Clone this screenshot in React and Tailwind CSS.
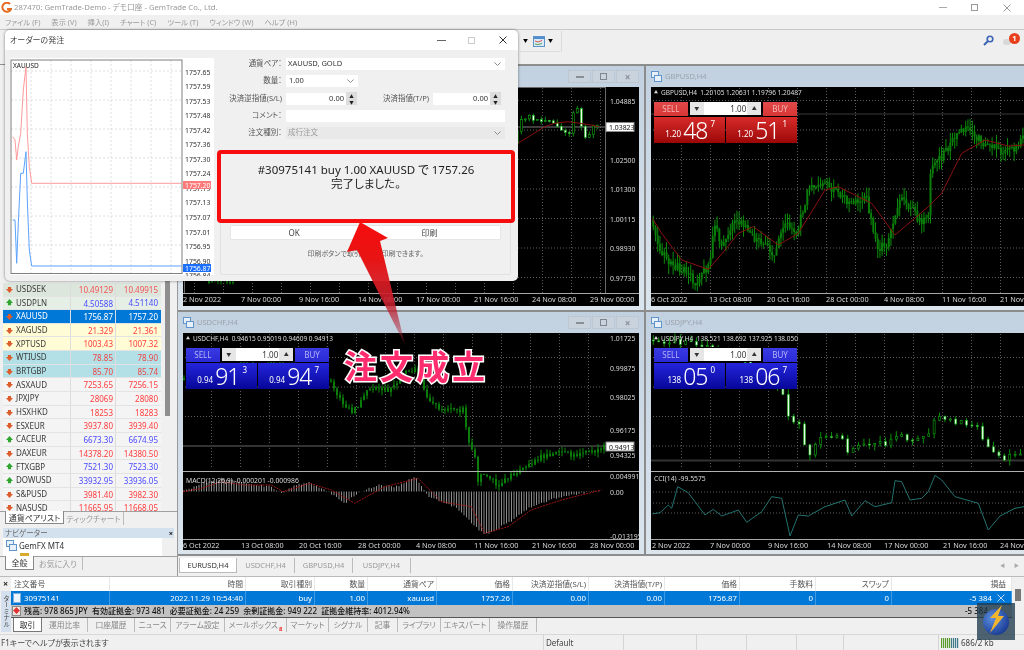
import React from 'react';

const FONT = "font-['Noto_Sans','Noto_Sans_CJK_JP',sans-serif] [font-feature-settings:'palt']";

// small repeatable noise so the candles stay the same on every run
const rnd = (seed) => {
  let s = seed;
  return () => {
    s = (s * 16807) % 2147483647;
    return (s % 1000) / 1000;
  };
};

const toPath = (pts) => pts.map(([x, y], i) => `${i ? 'L' : 'M'}${x.toFixed(1)} ${y.toFixed(1)}`).join(' ');

const lerp = (pts, x) => {
  for (let i = 1; i < pts.length; i++) {
    if (x <= pts[i][0]) {
      const [x0, y0] = pts[i - 1];
      const [x1, y1] = pts[i];
      return y0 + ((y1 - y0) * (x - x0)) / (x1 - x0 || 1);
    }
  }
  return pts[pts.length - 1][1];
};

const Candles = ({ pts, step = 3, seed = 7, noise = 4, wide = false, from, to }) => {
  const r = rnd(seed);
  const start = from ?? pts[0][0];
  const end = to ?? pts[pts.length - 1][0];
  const out = [];
  let prev = lerp(pts, start);
  for (let x = start; x < end; x += step) {
    const close = lerp(pts, x + step) + (r() - 0.5) * noise;
    const top = Math.min(prev, close);
    const bot = Math.max(prev, close);
    const bear = close > prev;
    const wickT = top - r() * noise;
    const wickB = bot + r() * noise;
    out.push(
      <g key={x}>
        <line x1={x + 1} x2={x + 1} y1={wickT} y2={wickB} stroke="#0b8f0b" strokeWidth="1" />
        {wide ? (
          <rect x={x} y={top} width="2" height={Math.max(bot - top, 1)} fill={bear ? '#e8ffe8' : '#000'} stroke="#0fa80f" strokeWidth="0.6" />
        ) : (
          <rect x={x} y={top} width="2" height={Math.max(bot - top, 1)} fill="#0a7d0a" />
        )}
      </g>
    );
    prev = close;
  }
  return <g>{out}</g>;
};

const Grid = ({ x0, y0, w, h, dx = 29, dy = 29.5 }) => {
  const v = [];
  const hz = [];
  for (let x = x0; x < w; x += dx) v.push(x);
  for (let y = y0; y < h; y += dy) hz.push(y);
  return (
    <g stroke="#5c5c5c" strokeDasharray="1 2" strokeWidth="1">
      {v.map((x) => <line key={x} x1={x + 0.5} x2={x + 0.5} y1="1" y2={h} />)}
      {hz.map((y) => <line key={y} x1="2" x2={w} y1={y + 0.5} y2={y + 0.5} />)}
    </g>
  );
};

const WinButtons = () => (
  <div className="flex gap-px">
    {['min', 'max', 'close'].map((b) => (
      <div key={b} className="w-[23px] h-[13px] bg-[#c9d3de] border border-[#bcc7d2] flex items-center justify-center">
        {b === 'min' && <div className="w-[8px] h-[2px] bg-[#8a8f96]" />}
        {b === 'max' && <div className="w-[7px] h-[7px] border border-[#7f858c]" />}
        {b === 'close' && <span className="text-[10px] leading-none font-bold text-[#8a8f96]">×</span>}
      </div>
    ))}
  </div>
);

const Price = ({ p, low }) => (
  <div className={`w-[71px] h-[26px] ${low} text-white flex items-center justify-end pr-[10px]`}>
    <span className="text-[8px] mt-[7px] mr-[2px]">{p[0]}</span>
    <span className="text-[23px] leading-none font-light tracking-[-1px]">{p[1]}</span>
    <span className="text-[8px] ml-[3px] mb-[12px]">{p[2]}</span>
  </div>
);

const TradePanel = ({ color, sell, buy }) => {
  const red = color === 'red';
  const top = red ? 'bg-gradient-to-b from-[#e04a4a] to-[#d83434]' : 'bg-gradient-to-b from-[#3a3ae2] to-[#2a2ad6]';
  const low = red ? 'bg-gradient-to-b from-[#d82a2a] to-[#9c0606]' : 'bg-gradient-to-b from-[#2424dc] to-[#06069a]';
  const label = red ? 'text-[#f4b4b4]' : 'text-[#b4b4f4]';
  return (
    <div className="absolute left-[3px] top-[15px] w-[143px] flex flex-col gap-px">
      <div className="flex h-[14px]">
        <div className={`w-[34px] ${top} ${label} text-[8px] flex items-center justify-center`}>SELL</div>
        <div className="w-[74px] mx-px -mt-px h-[15px] bg-white border border-black flex items-center text-[8px] text-[#333]">
          <span className="w-[14px] h-full bg-[#e6e6e6] flex items-center justify-center text-[5px]">▼</span>
          <span className="flex-1 text-right pr-[1px]">1.00</span>
          <span className="w-[14px] h-full bg-[#e6e6e6] flex items-center justify-center text-[5px]">▲</span>
        </div>
        <div className={`w-[34px] ${top} ${label} text-[8px] flex items-center justify-center`}>BUY</div>
      </div>
      <div className="flex gap-px">
        <Price p={sell} low={low} />
        <Price p={buy} low={low} />
      </div>
    </div>
  );
};

const ChartWindow = ({ title, info, panel, buttons, className, children }) => (
  <div className={`flex flex-col bg-gradient-to-b from-[#c2d1e0] to-[#dbe5ee] pl-[5px] pb-[4px] min-h-0 min-w-0 ${className}`}>
    <div className="h-[21px] shrink-0 flex items-center gap-[3px] text-[7.5px] text-[#9aa3ad]">
      <svg width="11" height="11" viewBox="0 0 11 11">
        <rect x="0.5" y="0.5" width="7" height="6" fill="#e8f1fa" stroke="#5f95cc" />
        <rect x="3.5" y="4.5" width="7" height="6" fill="#e8f1fa" stroke="#5f95cc" />
      </svg>
      <span className="flex-1">{title}</span>
      {buttons && <WinButtons />}
    </div>
    <div className="relative flex-1 bg-black overflow-hidden text-[8px]">
      {children}
      <div className="absolute left-[3px] top-[1px] text-[#ddd] flex items-center gap-[3px] text-[6.5px] whitespace-pre">
        <span className="text-[4px]">▲</span>
        {info}
      </div>
      {panel}
    </div>
  </div>
);

const DateAxis = ({ items, lineY, y }) => (
  <g>
    <line x1="0" x2="1000" y1={lineY + 0.5} y2={lineY + 0.5} stroke="#a8a8a8" />
    {items.map(([x, t]) => (
      <text key={t} x={x} y={y} fill="#d8d8d8" fontSize="7.3">{t}</text>
    ))}
  </g>
);

const Axis = ({ x, items }) => (
  <g>
    {items.map(([y, t]) => (
      <text key={t} x={x} y={y} fill="#d8d8d8" fontSize="6.9">{t}</text>
    ))}
  </g>
);

// chart shapes are read off the screenshot at 3x, offset to the plot's origin
const fromZoom = (pts, ox, oy) => pts.map(([x, y]) => [x / 3 + ox, y / 3 + oy]);

const EurChart = () => {
  const price = fromZoom([[1015, 250], [1030, 200], [1045, 175], [1060, 165], [1075, 180], [1130, 185], [1150, 200], [1170, 212], [1190, 225], [1195, 155], [1210, 148], [1220, 200], [1228, 232], [1240, 235], [1250, 200], [1262, 200]], -5, -27);
  const ma = fromZoom([[1020, 250], [1060, 225], [1100, 200], [1130, 190], [1170, 185], [1240, 195], [1262, 200]], -5, -27);
  const low = [[25, 196], [40, 193], [52, 195]];
  return (
    <svg className="absolute inset-0" width="100%" height="100%">
      <Grid x0={11} y0={13} w={423} h={206} />
      <line x1="0" x2="423" y1="40" y2="40" stroke="#7a7a7a" />
      <rect x="1.5" y="0.5" width="421" height="206" fill="none" stroke="#6a6a6a" />
      <Candles pts={low} seed={31} noise={3} />
      <Candles pts={price} seed={11} noise={4} wide step={4} />
      <path d={toPath(ma)} fill="none" stroke="#8a1010" />
      <Axis x={427} items={[[17, '1.04885'], [76, '1.02500'], [105, '1.01300'], [135, '1.00115'], [164, '0.98930'], [194, '0.97730']]} />
      <rect x="423" y="35.5" width="28" height="9" fill="#fff" stroke="#888" />
      <text x="426" y="43" fill="#111" fontSize="6.9">1.03823</text>
      <DateAxis lineY={206} y={215} items={[[0, '2 Nov 2022'], [58, '7 Nov 00:00'], [116, '9 Nov 16:00'], [175, '14 Nov 08:00'], [233, '17 Nov 00:00'], [291, '21 Nov 16:00'], [349, '24 Nov 08:00'], [407, '29 Nov 00:00']]} />
    </svg>
  );
};

const GbpChart = () => {
  const price = fromZoom([[22, 480], [45, 570], [80, 610], [130, 640], [155, 670], [200, 610], [210, 490], [240, 560], [280, 470], [330, 540], [395, 580], [420, 490], [460, 510], [500, 370], [560, 380], [610, 430], [670, 420], [700, 570], [730, 550], [770, 410], [830, 480], [855, 470], [860, 340], [900, 280], [950, 200], [1010, 240], [1090, 280], [1137, 240]], -6, -27);
  const ma = fromZoom([[22, 475], [50, 520], [110, 600], [190, 628], [240, 570], [280, 520], [325, 500], [400, 555], [460, 520], [540, 390], [580, 380], [680, 430], [750, 525], [850, 440], [890, 400], [950, 280], [1020, 240], [1090, 258], [1137, 255]], -6, -27);
  return (
    <svg className="absolute inset-0" width="100%" height="100%">
      <Grid x0={30} y0={13} w={373} h={206} />
      <line x1="0" x2="373" y1="27" y2="27" stroke="#3a3a3a" />
      <Candles pts={price} seed={19} noise={10} step={2.2} />
      <path d={toPath(ma)} fill="none" stroke="#8a1010" />
      <DateAxis lineY={206} y={215} items={[[0, '6 Oct 2022'], [58, '13 Oct 08:00'], [116, '20 Oct 16:00'], [175, '28 Oct 00:00'], [233, '4 Nov 08:00'], [291, '11 Nov 16:00'], [349, '21 Nov 16:00']]} />
    </svg>
  );
};

const ChfChart = () => {
  const price = [[0, 47], [13, 40], [90, 30], [151, 50], [163, 75], [173, 78], [187, 57], [207, 57], [228, 37], [238, 37], [247, 70], [263, 77], [283, 77], [287, 107], [295, 127], [297, 147], [303, 140], [317, 153], [330, 143], [360, 124], [375, 120], [400, 122], [423, 114]];
  const r = rnd(5);
  const macd = fromZoom([[15, 545], [70, 520], [130, 505], [200, 520], [280, 530], [315, 552], [350, 525], [395, 518], [440, 540], [500, 580], [540, 550], [600, 525], [660, 530], [710, 498], [750, 560], [830, 590], [920, 675], [990, 640], [1060, 590], [1150, 560], [1270, 540]], -5, -23);
  const sig = fromZoom([[15, 545], [70, 535], [130, 515], [200, 525], [280, 525], [315, 545], [395, 520], [460, 540], [530, 580], [620, 530], [720, 505], [790, 575], [880, 590], [920, 670], [990, 650], [1060, 600], [1150, 570], [1270, 540]], -5, -23);
  const bars = [];
  for (let x = 1; x < 418; x += 2.5) {
    bars.push(<line key={x} x1={x} x2={x} y1="158.5" y2={lerp(macd, x) + (r() - 0.5) * 2} stroke="#8c8c8c" strokeWidth="1" />);
  }
  return (
    <svg className="absolute inset-0" width="100%" height="100%">
      <Grid x0={28} y0={24} w={423} h={136} />
      <line x1="0" x2="423" y1="113" y2="113" stroke="#333" strokeWidth="2" />
      <Candles pts={price} seed={13} noise={5} step={3} />
      <line x1="0" x2="1000" y1="138.5" y2="138.5" stroke="#b0b0b0" />
      {bars}
      <path d={toPath(sig)} fill="none" stroke="#a51515" strokeDasharray="2 1" />
      <text x="3" y="150" fill="#d8d8d8" fontSize="6.8">MACD(12,26,9) -0.000201 -0.000986</text>
      <Axis x={427} items={[[8, '1.01725'], [38, '0.99875'], [67, '0.98025'], [100, '0.96175'], [125, '0.94325'], [146, '0.004991'], [162, '0.00'], [206, '-0.013195']]} />
      <rect x="423" y="109" width="28" height="9" fill="#fff" stroke="#888" />
      <text x="426" y="116.5" fill="#111" fontSize="6.9">0.94913</text>
      <DateAxis lineY={206} y={215} items={[[0, '6 Oct 2022'], [58, '13 Oct 08:00'], [116, '20 Oct 16:00'], [175, '28 Oct 00:00'], [233, '4 Nov 08:00'], [291, '11 Nov 16:00'], [349, '21 Nov 16:00'], [407, '28 Nov 00:00']]} />
    </svg>
  );
};

const JpyChart = () => {
  const price = fromZoom([[22, 90], [150, 100], [250, 120], [425, 240], [440, 310], [450, 350], [470, 310], [490, 400], [510, 430], [550, 375], [580, 385], [610, 380], [625, 430], [660, 400], [740, 405], [755, 370], [800, 390], [870, 365], [885, 320], [940, 335], [1010, 345], [1030, 390], [1060, 430], [1090, 445], [1137, 430]], -6, -23);
  const cci = fromZoom([[22, 612], [45, 608], [70, 585], [80, 595], [98, 530], [130, 548], [180, 615], [205, 598], [230, 618], [280, 600], [305, 637], [350, 605], [380, 560], [410, 565], [435, 678], [460, 615], [490, 618], [540, 590], [600, 570], [620, 618], [660, 572], [690, 590], [740, 578], [750, 512], [770, 515], [795, 570], [830, 565], [850, 545], [870, 496], [890, 510], [930, 560], [1000, 580], [1030, 660], [1065, 618], [1110, 595], [1137, 590]], -6, -23);
  return (
    <svg className="absolute inset-0" width="100%" height="100%">
      <Grid x0={30} y0={24} w={373} h={136} />
      <line x1="0" x2="373" y1="127.5" y2="127.5" stroke="#333" strokeWidth="2" />
      <Candles pts={price} seed={23} noise={6} wide step={5.4} />
      <line x1="0" x2="1000" y1="138.5" y2="138.5" stroke="#b0b0b0" />
      <g stroke="#5c5c5c" strokeDasharray="1 2">
        <line x1="2" x2="373" y1="159" y2="159" />
        <line x1="2" x2="373" y1="170" y2="170" />
        <line x1="2" x2="373" y1="180" y2="180" />
      </g>
      <path d={toPath(cci)} fill="none" stroke="#23726f" />
      <text x="3" y="148" fill="#d8d8d8" fontSize="6.8">CCI(14) -99.5575</text>
      <DateAxis lineY={206} y={215} items={[[1, '2 Nov 2022'], [59, '7 Nov 00:00'], [117, '9 Nov 16:00'], [176, '14 Nov 08:00'], [233, '17 Nov 00:00'], [292, '21 Nov 16:00'], [349, '24 Nov 08:00']]} />
    </svg>
  );
};

const RED = 'text-[#f25353]';
const BLUE = 'text-[#4a4aff]';
const quotes = [
  ['USDSEK', '10.49129', '10.49915', 'bg-[#dde6dc]', RED, 'down'],
  ['USDPLN', '4.50588', '4.51140', 'bg-[#e6efe6]', BLUE, 'up'],
  ['XAUUSD', '1756.87', '1757.20', 'bg-[#0078d7]', 'text-white', 'down'],
  ['XAGUSD', '21.329', '21.361', 'bg-[#fffcd6]', 'text-[#ff3b3b]', 'down'],
  ['XPTUSD', '1003.43', '1007.32', 'bg-[#fffcd6]', 'text-[#ff3b3b]', 'down'],
  ['WTIUSD', '78.85', '78.90', 'bg-[#b2e0e6]', 'text-[#f04545]', 'down'],
  ['BRTGBP', '85.70', '85.74', 'bg-[#b2e0e6]', 'text-[#f04545]', 'down'],
  ['ASXAUD', '7253.65', '7256.15', 'bg-[#f4f4f4]', 'text-[#ff3b3b]', 'down'],
  ['JPXJPY', '28069', '28080', 'bg-[#f4f4f4]', 'text-[#ff3b3b]', 'down'],
  ['HSXHKD', '18253', '18283', 'bg-[#f4f4f4]', 'text-[#ff3b3b]', 'down'],
  ['ESXEUR', '3937.80', '3939.40', 'bg-[#f4f4f4]', 'text-[#ff3b3b]', 'down'],
  ['CACEUR', '6673.30', '6674.95', 'bg-[#f4f4f4]', BLUE, 'up'],
  ['DAXEUR', '14378.20', '14380.50', 'bg-[#f4f4f4]', 'text-[#ff3b3b]', 'down'],
  ['FTXGBP', '7521.30', '7523.30', 'bg-[#f4f4f4]', BLUE, 'up'],
  ['DOWUSD', '33932.95', '33936.05', 'bg-[#f4f4f4]', BLUE, 'up'],
  ['S&PUSD', '3981.40', '3982.30', 'bg-[#f4f4f4]', 'text-[#ff3b3b]', 'down'],
  ['NASUSD', '11665.95', '11668.05', 'bg-[#f4f4f4]', 'text-[#ff3b3b]', 'down'],
];

const Arrow = ({ dir }) => (
  <svg width="7" height="7" viewBox="0 0 8 8" className="shrink-0">
    <path d="M2.2 1 H5.8 V3.5 H8 L4 8 L0 3.5 H2.2 Z" fill={dir === 'up' ? '#2fa52f' : '#dc5c2c'} transform={dir === 'up' ? 'rotate(180 4 4)' : ''} />
  </svg>
);

const Sidebar = () => (
  <div className="w-[178px] shrink-0 bg-[#f0f0f0] flex flex-col border-r border-[#9a9a9a] text-[8px] text-[#333]">
    <div className="flex-1 min-h-0 flex pl-[3px] overflow-hidden">
      <div className="w-[158px] flex flex-col justify-end overflow-hidden">
        <div className="-mb-[4px]">
          {quotes.map(([sym, bid, ask, bg, color, dir]) => (
            <div key={sym} className={`flex items-center h-[13.67px] border-b border-[#e3e3e3] ${bg}`}>
              <div className="w-[68px] flex items-center gap-[3px] pl-[3px] border-r border-[#dcdcdc] h-full">
                <Arrow dir={dir} />
                <span className={sym === 'XAUUSD' ? 'text-white' : 'text-[#3a3a3a]'}>{sym}</span>
              </div>
              <div className={`w-[45px] text-right pr-[2px] border-r border-[#dcdcdc] h-full leading-[13px] ${color}`}>{bid}</div>
              <div className={`w-[45px] text-right pr-[3px] leading-[13px] ${color}`}>{ask}</div>
            </div>
          ))}
        </div>
      </div>
      <div className="w-[5px] ml-[4px] h-[267px] mt-[84px] bg-[#8e8e8e]" />
    </div>
    <div className="h-[16px] shrink-0 flex items-start pl-[5px] border-t border-[#a0a0a0] text-[#9a9a9a]">
      <div className="w-[59px] h-[13px] -mt-px bg-white border-x border-b border-[#888] text-[#333] text-center leading-[13px]">通貨ペアリスト</div>
      <div className="w-[60px] h-[13px] border-r border-[#bbb] text-center leading-[13px]">ティックチャート</div>
    </div>
    <div className="h-[48px] shrink-0 flex flex-col mt-[1px] pb-[4px]">
      <div className="h-[10px] mx-[3px] bg-[#d3e0ee] text-[#666] text-[7.5px] leading-[10px] pl-[2px] flex justify-between">
        ナビゲーター
        <span className="font-bold text-[#111] pr-px">×</span>
      </div>
      <div className="flex-1 ml-[3px] mr-[15px] bg-white flex flex-col pl-[3px] pt-[2px] overflow-hidden text-[#333]">
        <div className="flex items-center gap-[2px]">
          <svg width="11" height="11" viewBox="0 0 11 11">
            <rect x="0.5" y="0.5" width="7" height="6" fill="#e8f1fa" stroke="#5f95cc" />
            <rect x="3.5" y="4.5" width="7" height="6" fill="#e8f1fa" stroke="#5f95cc" />
          </svg>
          <span className="text-[8px] leading-[11px]">GemFX MT4</span>
        </div>
        <div className="ml-[14px] mt-[2px] w-[9px] h-[6px] shrink-0 bg-[#d9a92e]" />
      </div>
      <div className="h-[16px] shrink-0 flex items-start pl-[5px] border-t border-[#a0a0a0] text-[#9a9a9a]">
        <div className="w-[29px] h-[14px] -mt-px bg-white border-x border-b border-[#888] text-[#333] text-center leading-[14px]">全般</div>
        <div className="w-[49px] h-[13px] border-r border-[#bbb] text-center leading-[13px]">お気に入り</div>
      </div>
    </div>
  </div>
);

const cols = 'grid grid-cols-[99px_136px_69px_53px_69px_76px_76px_76px_75px_76px_76px_120px]';
const heads = [['注文番号', 'text-left'], ['時間'], ['取引種別'], ['数量'], ['通貨ペア'], ['価格'], ['決済逆指値(S/L)'], ['決済指値(T/P)'], ['価格'], ['手数料'], ['スワップ'], ['損益']];
const values = ['30975141', '2022.11.29 10:54:40', 'buy', '1.00', 'xauusd', '1757.26', '0.00', '0.00', '1756.87', '0', '0', '-5 384'];
const tabs = [
  ['取引', 'w-[29px]'], ['運用比率', 'w-[46px]'], ['口座履歴', 'w-[47px]'], ['ニュース', 'w-[36px]'],
  ['アラーム設定', 'w-[54px]'], ['メールボックス', 'w-[62px]'], ['マーケット', 'w-[42px]'], ['シグナル', 'w-[39px]'],
  ['記事', 'w-[30px]'], ['ライブラリ', 'w-[43px]'], ['エキスパート', 'w-[49px]'], ['操作履歴', 'w-[47px]'],
];

const Terminal = () => (
  <div className="h-[57px] shrink-0 flex bg-[#f0f0f0] border-t border-[#bbb] text-[7.8px] relative">
    <div className="w-[11px] shrink-0 flex flex-col items-center">
      <span className="text-[9px] leading-[13px] font-bold text-[#222]">×</span>
      <div className="mt-px w-[10px] h-[41px] bg-[#d4e0ee] text-[6.5px] text-[#444] leading-[10px] [writing-mode:vertical-rl] text-center">ターミナル</div>
    </div>
    <div className="w-[1001px] flex flex-col">
      <div className={`${cols} h-[14px] bg-white text-[#555]`}>
        {heads.map(([h, align], i) => (
          <div key={i} className={`leading-[14px] border-r border-[#e8e8e8] whitespace-nowrap ${i === 0 ? 'pl-[3px]' : 'px-[2px]'} ${i === 11 ? 'pr-[5px]' : ''} ${align || 'text-right'}`}>{h}</div>
        ))}
      </div>
      <div className={`${cols} h-[14px] bg-[#0078d7] text-white`}>
        {values.map((v, i) => (
          <div key={i} className={`px-[2px] leading-[14px] border-r border-[#3f9ae2] whitespace-nowrap ${i === 0 ? 'flex items-center gap-[3px]' : 'text-right'} ${i === 11 ? 'flex items-center justify-end gap-[5px] pr-[6px]' : ''}`}>
            {i === 0 && <div className="w-[8px] h-[10px] bg-[#eef4fb] border border-[#7fb0dc]" />}
            {v}
            {i === 11 && (
              <svg width="8" height="8" viewBox="0 0 8 8">
                <path d="M0.5 0.5 L7.5 7.5 M7.5 0.5 L0.5 7.5" stroke="#bcd8f0" />
              </svg>
            )}
          </div>
        ))}
      </div>
      <div className="h-[13px] bg-[#c2c2c2] border-b border-[#555] flex items-center text-[#111] whitespace-pre pl-[1px] text-[8px] font-medium">
        <div className="w-[9px] h-[10px] bg-[#f0e8e0] border border-[#888] text-[#d33] text-[7px] leading-[8px] text-center mr-[3px]">◆</div>
        <span className="flex-1">残高: 978 865 JPY  有効証拠金: 973 481  必要証拠金: 24 259  余剰証拠金: 949 222  証拠金維持率: 4012.94%</span>
        <span className="pr-[24px]">-5 384</span>
      </div>
      <div className="flex-1 flex items-start pl-[2px] text-[#888]">
        {tabs.map(([t, w], i) => (
          <div key={t} className={`h-[14px] shrink-0 ${w} leading-[14px] text-center whitespace-nowrap border-r ${i === 0 ? 'bg-white border-x border-b border-[#777] text-[#222]' : 'border-[#bbb]'}`}>
            {t}
            {t === 'メールボックス' && <span className="text-[#e33] text-[6px] font-bold align-sub ml-px">8</span>}
          </div>
        ))}
      </div>
    </div>
    <div className="flex-1 flex flex-col items-center pt-[12px]">
      <div className="w-[6px] h-[12px] bg-[#777]" />
    </div>
  </div>
);

const statusCells = [['w-[80px]', 'Default'], ['w-[73px]', ''], ['w-[50px]', ''], ['w-[50px]', ''], ['w-[47px]', ''], ['w-[49px]', '']];

const StatusBar = () => (
  <div className="h-[16px] shrink-0 mt-[1px] flex items-center bg-[#f0f0f0] border-t border-[#d8d8d8] text-[8px] text-[#444]">
    <div className="w-[543px] pl-[1px]">F1キーでヘルプが表示されます</div>
    {statusCells.map(([w, t], i) => (
      <div key={i} className={`${w} h-full border-l border-[#d4d4d4] pl-[2px] leading-[15px]`}>{t}</div>
    ))}
    <div className="h-full border-l border-[#d4d4d4] pl-[2px] flex items-center gap-[2px] ml-[46px]">
      <svg width="18" height="10" viewBox="0 0 18 10">
        {[0, 2, 4, 6, 8, 10, 12, 14, 16].map((x) => (
          <rect key={x} x={x} y="0" width="1.2" height="10" fill={x < 10 ? '#5c9a2a' : '#3d7a8a'} />
        ))}
      </svg>
      <span>686/2 kb</span>
    </div>
  </div>
);

const Field = ({ w = 'flex-1', children, disabled }) => (
  <div className={`${w} h-[12px] flex items-center justify-between px-[2px] text-[7.5px] ${disabled ? 'bg-[#e9e9e9] text-[#9a9a9a]' : 'bg-white text-[#333]'}`}>
    {children}
  </div>
);

const Chevron = () => (
  <svg width="7" height="4" viewBox="0 0 7 4" className="shrink-0 mr-[2px]">
    <path d="M0.5 0.5 L3.5 3.5 L6.5 0.5" fill="none" stroke="#8a8a8a" />
  </svg>
);

const Spin = () => (
  <div className="w-[11px] h-[13px] bg-[#dcdcdc] flex flex-col items-center justify-center text-[4.5px] leading-[6px] text-[#222]">
    <span>▲</span>
    <span>▼</span>
  </div>
);

const Label = ({ w = 'w-[66px]', children }) => (
  <div className={`${w} text-right pr-[4px] text-[7.5px] text-[#555] whitespace-nowrap`}>{children}</div>
);

const OrderChart = () => {
  const sellLine = fromZoom([[38, 410], [45, 420], [50, 480], [55, 440], [62, 400], [70, 270], [78, 200], [82, 400], [88, 500], [95, 550], [545, 550]], 0, 0);
  const buyLine = fromZoom([[38, 660], [45, 660], [50, 790], [55, 670], [62, 520], [70, 520], [78, 455], [82, 600], [88, 750], [95, 798], [545, 798]], 0, 0);
  const prices = ['1757.65', '1757.59', '1757.53', '1757.48', '1757.42', '1757.36', '1757.30', '1757.24', '1757.19', '1757.13', '1757.07', '1757.01', '1756.95', '1756.90', '1756.84'];
  return (
    <svg className="absolute left-[5px] top-[28px]" width="208" height="218" viewBox="10 58 208 218">
      <rect x="10" y="58" width="204" height="217" fill="#fff" />
      <g stroke="#dedede" strokeDasharray="2 2">
        {[29, 58, 87, 116, 145, 174, 203, 232].map((d) => <line key={d} x1={11 + d / 1.45} x2={11 + d / 1.45} y1="60" y2="273" />)}
        {[71, 100, 129, 158, 187, 216, 245].map((y) => <line key={y} x1="11" x2="183" y1={y} y2={y} />)}
      </g>
      <rect x="11" y="60" width="171" height="213.5" fill="none" stroke="#7e7e7e" />
      <path d={toPath(sellLine)} fill="none" stroke="#ff9a9a" />
      <path d={toPath(buyLine)} fill="none" stroke="#5aa2ff" />
      <text x="13" y="68" fontSize="6.5" fill="#222">XAUUSD</text>
      {prices.map((p, i) => (
        <text key={p} x="185" y={74.5 + i * 14.55} fontSize="6.9" fill="#333">{p}</text>
      ))}
      <rect x="183" y="181" width="28" height="8" fill="#ff7a7a" />
      <text x="185" y="188" fontSize="6.9" fill="#fff">1757.20</text>
      <rect x="183" y="264" width="28" height="8" fill="#1a6fff" />
      <text x="185" y="271" fontSize="6.9" fill="#fff">1756.87</text>
    </svg>
  );
};

const OrderDialog = () => (
  <div className="absolute left-[5px] top-[30px] w-[513px] h-[251px] rounded-[5px] bg-[#f0f0f0] shadow-[0_0_3px_rgba(0,0,0,0.5)] overflow-hidden">
    <div className="h-[20px] bg-white flex items-center pl-[5px] text-[8px] text-[#444]">
      <span className="flex-1">オーダーの発注</span>
      <div className="w-[9px] h-px bg-[#666] mr-[22px]" />
      <div className="w-[7px] h-[7px] border border-[#ccc] mr-[24px]" />
      <svg width="8" height="8" viewBox="0 0 8 8" className="mr-[11px]">
        <path d="M0.5 0.5 L7.5 7.5 M7.5 0.5 L0.5 7.5" stroke="#333" />
      </svg>
    </div>
    <OrderChart />
    <div className="absolute left-[215px] top-[28px] w-[285px] flex flex-col gap-[5px]">
      <div className="flex items-center">
        <Label>通貨ペア：</Label>
        <Field><span>XAUUSD, GOLD</span><Chevron /></Field>
      </div>
      <div className="flex items-center">
        <Label>数量：</Label>
        <Field w="w-[72px]"><span className="pl-[1px]">1.00</span><Chevron /></Field>
      </div>
      <div className="flex items-center">
        <Label>決済逆指値(S/L)</Label>
        <Field w="w-[60px]"><span className="ml-auto">0.00</span></Field>
        <Spin />
        <Label w="w-[76px]">決済指値(T/P)</Label>
        <Field w="w-[57px]"><span className="ml-auto">0.00</span></Field>
        <Spin />
      </div>
      <div className="flex items-center">
        <Label>コメント：</Label>
        <Field />
      </div>
      <div className="flex items-center">
        <Label>注文種別：</Label>
        <Field disabled><span>成行注文</span><Chevron /></Field>
      </div>
    </div>
    <div className="absolute left-[215px] top-[124px] w-[291px] h-[121px] border border-[#e2e2e2] rounded-[2px]">
      <div className="flex flex-col items-center gap-[10px] mt-[71px]">
        <div className="w-[269px] h-[13px] bg-white shadow-[0_0_1px_rgba(0,0,0,0.25)] flex text-[8px] text-[#444] leading-[13px]">
          <span className="w-[126px] text-center">OK</span>
          <span className="w-[143px] text-center pl-[2px]">印刷</span>
        </div>
        <span className="text-[7px] text-[#666]">印刷ボタンで取引内容を印刷できます。</span>
      </div>
    </div>
  </div>
);

const Callout = () => (
  <div className="absolute left-[217px] top-[150px] w-[298px] h-[73px] border-[4px] border-[#f70d0d] rounded-[4px] bg-[#f0f0f0] flex flex-col items-center pt-[9px] text-[11.5px] leading-[14px] text-[#222]">
    <span>#30975141 buy 1.00 XAUUSD で 1757.26</span>
    <span>完了しました。</span>
  </div>
);

const Watermark = () => (
  <svg className="absolute left-[977px] top-[603px]" width="38" height="37" viewBox="0 0 38 37">
    <rect width="38" height="37" fill="#1f3a4d" fillOpacity="0.78" />
    <defs>
      <radialGradient id="wm" cx="35%" cy="35%" r="70%">
        <stop offset="0" stopColor="#5b8fe0" />
        <stop offset="1" stopColor="#1b3c94" />
      </radialGradient>
    </defs>
    <circle cx="19" cy="19" r="13" fill="url(#wm)" />
    <path d="M25 2 L13 15 L19 15 L13 30 L27 13 L21 13 Z" fill="#f1b52e" />
  </svg>
);

export default function App() {
  return (
    <div className={`relative w-[1024px] h-[650px] overflow-hidden bg-[#f0f0f0] blur-[0.35px] ${FONT}`}>
      <div className="flex flex-col h-full">
        <div className="h-[15px] shrink-0 bg-white flex items-center text-[7.7px] text-[#999]">
          <svg width="11" height="11" viewBox="0 0 11 11" className="ml-[1px] mr-[2px]">
            <path d="M9 2 A4.5 4.5 0 1 0 10 7 L6 7" fill="none" stroke="#e46a1e" strokeWidth="2" />
          </svg>
          <span className="flex-1">287470: GemTrade-Demo - デモ口座 - GemTrade Co., Ltd.</span>
          <div className="w-[8px] h-px bg-[#aaa] mr-[24px]" />
          <div className="w-[7px] h-[7px] border border-[#999] mr-[25px]" />
          <svg width="8" height="8" viewBox="0 0 8 8" className="mr-[13px]">
            <path d="M0.5 0.5 L7.5 7.5 M7.5 0.5 L0.5 7.5" stroke="#999" />
          </svg>
        </div>
        <div className="h-[15px] shrink-0 bg-[#f0f0f0] border-b border-[#c8c8c8] flex items-center gap-[11px] pl-[5px] text-[7.3px] text-[#999]">
          {['ファイル (F)', '表示 (V)', '挿入(I)', 'チャート (C)', 'ツール (T)', 'ウィンドウ (W)', 'ヘルプ (H)'].map((m) => <span key={m}>{m}</span>)}
        </div>
        <div className="h-[35px] shrink-0 bg-[#efefef] border-b border-[#8f8f8f] flex items-start pt-[1px]">
          <div className="ml-[520px] w-[42px] h-[21px] border-r border-b border-[#dcdcdc] rounded-br-[2px] flex items-center gap-[7px] pl-[3px]">
            <span className="text-[5px] text-black">▼</span>
            <svg width="12" height="11" viewBox="0 0 12 11" className="-ml-[2px]">
              <rect x="0.5" y="0.5" width="11" height="10" fill="#dbe9f7" stroke="#5c93c9" />
              <rect x="1" y="1" width="10" height="2" fill="#4f8fcf" />
              <path d="M2 5 L5 6 L9 4.5" stroke="#d9534f" fill="none" />
              <path d="M2 8 L5 8.5 L9 7.5" stroke="#5aa84a" fill="none" />
            </svg>
            <span className="text-[5px] text-black -ml-[4px]">▼</span>
          </div>
          <div className="flex-1" />
          <svg width="11" height="11" viewBox="0 0 11 11" className="mt-[4px] mr-[8px]">
            <circle cx="7" cy="4" r="2.8" fill="none" stroke="#3a62b5" strokeWidth="1.6" />
            <path d="M5 6 L1 10" stroke="#3a62b5" strokeWidth="2" />
          </svg>
          <div className="relative w-[20px] h-[20px] mr-[2px]">
            <div className="absolute left-[1px] top-[8px] w-[8px] h-[6px] rounded-full bg-[#d8d8d8]" />
            <div className="absolute right-[2px] top-[2px] w-[11px] h-[11px] rounded-full bg-[#e8401c] text-white text-[7.5px] leading-[11px] text-center font-bold">1</div>
          </div>
        </div>
        <div className="flex-1 min-h-0 flex">
          <Sidebar />
          <div className="flex-1 min-w-0 flex flex-col">
            <div className="h-[491px] shrink-0 grid grid-cols-[466px_378px] grid-rows-[244px_242px] gap-x-[2px] gap-y-[2px] bg-[#8c8c8c] pt-px pb-[2px]">
              <ChartWindow className="pr-[5px]" title="EURUSD,H4" buttons info="EURUSD,H4" panel={null}>
                <EurChart />
              </ChartWindow>
              <ChartWindow
                title="GBPUSD,H4"
                info="GBPUSD,H4  1.20105 1.20631 1.19796 1.20487"
                panel={<TradePanel color="red" sell={['1.20', '48', '7']} buy={['1.20', '51', '1']} />}
              >
                <GbpChart />
              </ChartWindow>
              <ChartWindow
                className="pr-[5px]"
                title="USDCHF,H4"
                buttons
                info="USDCHF,H4  0.94615 0.95019 0.94609 0.94913"
                panel={<TradePanel color="blue" sell={['0.94', '91', '3']} buy={['0.94', '94', '7']} />}
              >
                <ChfChart />
              </ChartWindow>
              <ChartWindow
                title="USDJPY,H4"
                info="USDJPY,H4  138.521 138.692 137.925 138.050"
                panel={<TradePanel color="blue" sell={['138', '05', '0']} buy={['138', '06', '7']} />}
              >
                <JpyChart />
              </ChartWindow>
            </div>
            <div className="flex-1 min-h-0 flex items-start text-[7.5px] text-[#999] bg-[#f0f0f0] pt-[2px] pl-px">
              {['EURUSD,H4', 'USDCHF,H4', 'GBPUSD,H4', 'USDJPY,H4'].map((t, i) => (
                <div key={t} className={`h-[15px] w-[58px] text-center leading-[15px] border-r border-[#bbb] ${i === 0 ? 'bg-white text-[#333] border-x border-b border-[#888]' : ''}`}>{t}</div>
              ))}
              <div className="flex-1 flex justify-end gap-[9px] pr-[5px] text-[5px] leading-[15px] text-[#aaa]"><span>◀</span><span>▶</span></div>
            </div>
          </div>
        </div>
        <Terminal />
        <StatusBar />
      </div>

      <OrderDialog />
      <Callout />

      <svg className="absolute left-[330px] top-[210px]" width="90" height="140" viewBox="330 210 90 140">
        <defs>
          <linearGradient id="arrowFade" x1="0" y1="0" x2="0" y2="1">
            <stop offset="0" stopColor="#f70d0d" />
            <stop offset="0.3" stopColor="#e81414" />
            <stop offset="0.65" stopColor="#c8202e" stopOpacity="0.9" />
            <stop offset="1" stopColor="#a02538" stopOpacity="0.25" />
          </linearGradient>
        </defs>
        <path d="M360 222 L388 238 L380 241 L405 345 L357 250 L347 252 Z" fill="url(#arrowFade)" />
      </svg>
      <div className="absolute left-[344px] top-[346px] text-[33px] leading-[42px] font-bold tracking-[3px] text-[#ff2d6e] whitespace-nowrap [-webkit-text-stroke:3px_white] [paint-order:stroke_fill]">注文成立</div>
      <Watermark />
    </div>
  );
}
